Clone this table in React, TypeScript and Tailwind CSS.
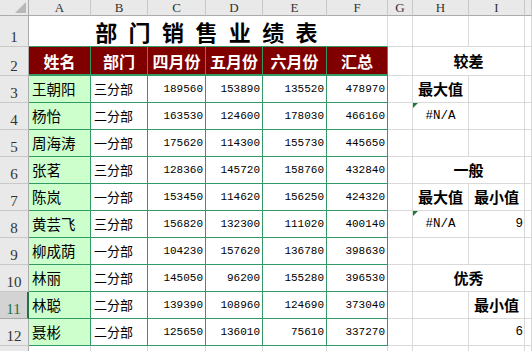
import React from "react";

const green = "border-[#339966]";
const grid = "border-[#d9d9d9]";

type Row = [string, string, number, number, number, number];
const rows: Row[] = [
  ["王朝阳", "三分部", 189560, 153890, 135520, 478970],
  ["杨怡", "二分部", 163530, 124600, 178030, 466160],
  ["周海涛", "一分部", 175620, 114300, 155730, 445650],
  ["张茗", "三分部", 128360, 145720, 158760, 432840],
  ["陈岚", "一分部", 153450, 114620, 156250, 424320],
  ["黄芸飞", "三分部", 156820, 132300, 111020, 400140],
  ["柳成荫", "一分部", 104230, 157620, 136780, 398630],
  ["林丽", "二分部", 145050, 96200, 155280, 396530],
  ["林聪", "二分部", 139390, 108960, 124690, 373040],
  ["聂彬", "二分部", 125650, 136010, 75610, 337270],
];

const cols = ["A", "B", "C", "D", "E", "F", "G", "H", "I", ""];

const cjk = "font-['Noto_Sans_CJK_SC',sans-serif]";
const mono = "font-['Liberation_Mono',monospace] text-[11px]";
const monoBig = "font-['Liberation_Mono',monospace] text-[12.5px]";
const label = `${cjk} font-bold text-[15px] text-black`;

const Flag = () => (
  <span className="absolute left-0 top-0 h-0 w-0 border-t-[5px] border-r-[5px] border-t-[#1e7b34] border-r-transparent" />
);

// side area, indexed by sheet row 2..12: [H, I] or merged label
type Side = { merged?: string; h?: React.ReactNode; i?: React.ReactNode };
const side: Record<number, Side> = {
  2: { merged: "较差" },
  3: { h: <span className={label}>最大值</span> },
  4: { h: <span className={monoBig}>#N/A</span> },
  6: { merged: "一般" },
  7: { h: <span className={label}>最大值</span>, i: <span className={label}>最小值</span> },
  8: { h: <span className={monoBig}>#N/A</span>, i: <span className={`${monoBig} ml-auto pr-[1px]`}>9</span> },
  10: { merged: "优秀" },
  11: { i: <span className={label}>最小值</span> },
  12: { i: <span className={`${monoBig} ml-auto pr-[1px]`}>6</span> },
};

const RowHead = ({ n, active }: { n: number; active?: boolean }) => (
  <div
    className={`flex items-end justify-center border-b pb-[1px] font-['Liberation_Serif',serif] text-[15px] leading-none ${
      active
        ? "border-r-2 border-r-[#217346] border-b-[#a8a8a8] bg-[#d3d3d3] text-[#217346]"
        : "border-r border-r-[#ababab] border-b-[#c8c8c8] bg-[#e9e9e9] text-[#333]"
    }`}
  >
    {n}
  </div>
);

export default function App() {
  return (
    <div className="grid h-[351px] w-[532px] grid-cols-[29px_62px_57px_58px_57px_64px_61px_25px_56px_56px_1fr] grid-rows-[16px_31px_29px_repeat(10,27px)_1fr] overflow-hidden bg-white">
      {/* column headers */}
      <div className="relative border-b border-r border-[#ababab] bg-[#e9e9e9]">
        <span className="absolute bottom-[2px] right-[2px] h-0 w-0 border-b-[11px] border-l-[11px] border-b-[#b7b7b7] border-l-transparent" />
      </div>
      {cols.map((c, i) => (
        <div
          key={i}
          className="flex items-center justify-center border-b border-r border-b-[#ababab] border-r-[#c8c8c8] bg-[#e9e9e9] font-['Liberation_Serif',serif] text-[13px] leading-none text-[#333]"
        >
          {c}
        </div>
      ))}

      {/* row 1 title */}
      <RowHead n={1} />
      <div
        className={`col-span-6 flex items-center justify-center border-b border-r border-r-[#d9d9d9] ${green} pt-[1px] ${cjk} text-[22px] font-bold tracking-[3.2px] text-black`}
      >
        部 门 销 售 业 绩 表
      </div>
      <div className={`border-b border-r ${grid}`} />
      <div className={`border-b border-r ${grid}`} />
      <div className={`border-b border-r ${grid}`} />
      <div className={`border-b border-r ${grid}`} />

      {/* row 2 headers */}
      <RowHead n={2} />
      {["姓名", "部门", "四月份", "五月份", "六月份", "汇总"].map((t) => (
        <div
          key={t}
          className={`flex items-center justify-center border-b-2 border-r ${green} bg-[#800000] ${cjk} text-[16px] font-bold text-white`}
        >
          {t}
        </div>
      ))}
      <div className={`border-b border-r ${grid}`} />
      <div className={`col-span-2 flex items-center justify-center border-b border-r ${grid} ${label}`}>
        较差
      </div>
      <div className={`border-b border-r ${grid}`} />

      {rows.map((r, idx) => {
        const n = idx + 3;
        const s = side[n] ?? {};
        return (
          <React.Fragment key={n}>
            <RowHead n={n} active={n === 11} />
            <div className={`flex items-center border-b border-r ${green} bg-[#ccffcc] pl-[3px] ${cjk} text-[14.5px] text-black`}>
              {r[0]}
            </div>
            <div className={`flex items-center border-b border-r ${green} pl-[3px] ${cjk} text-[13px] text-black`}>
              {r[1]}
            </div>
            {[r[2], r[3], r[4], r[5]].map((v, k) => (
              <div
                key={k}
                className={`flex items-center justify-end border-b border-r ${green} pr-[2px] ${mono} text-black`}
              >
                {v}
              </div>
            ))}
            <div className={`border-b border-r ${grid}`} />
            {s.merged ? (
              <div className={`col-span-2 flex items-center justify-center border-b border-r ${grid} ${label}`}>
                {s.merged}
              </div>
            ) : (
              <>
                <div className={`relative flex items-center justify-center border-b border-r ${grid} text-black`}>
                  {n === 4 || n === 8 ? <Flag /> : null}
                  {s.h}
                </div>
                <div className={`flex items-center justify-center border-b border-r ${grid} text-black`}>
                  {s.i}
                </div>
              </>
            )}
            <div className={`border-b border-r ${grid}`} />
          </React.Fragment>
        );
      })}

      {/* partial row 13 */}
      <div className="border-r border-[#ababab] bg-[#e9e9e9]" />
      {cols.map((_, i) => (
        <div key={i} className={`border-r ${grid}`} />
      ))}
    </div>
  );
}
